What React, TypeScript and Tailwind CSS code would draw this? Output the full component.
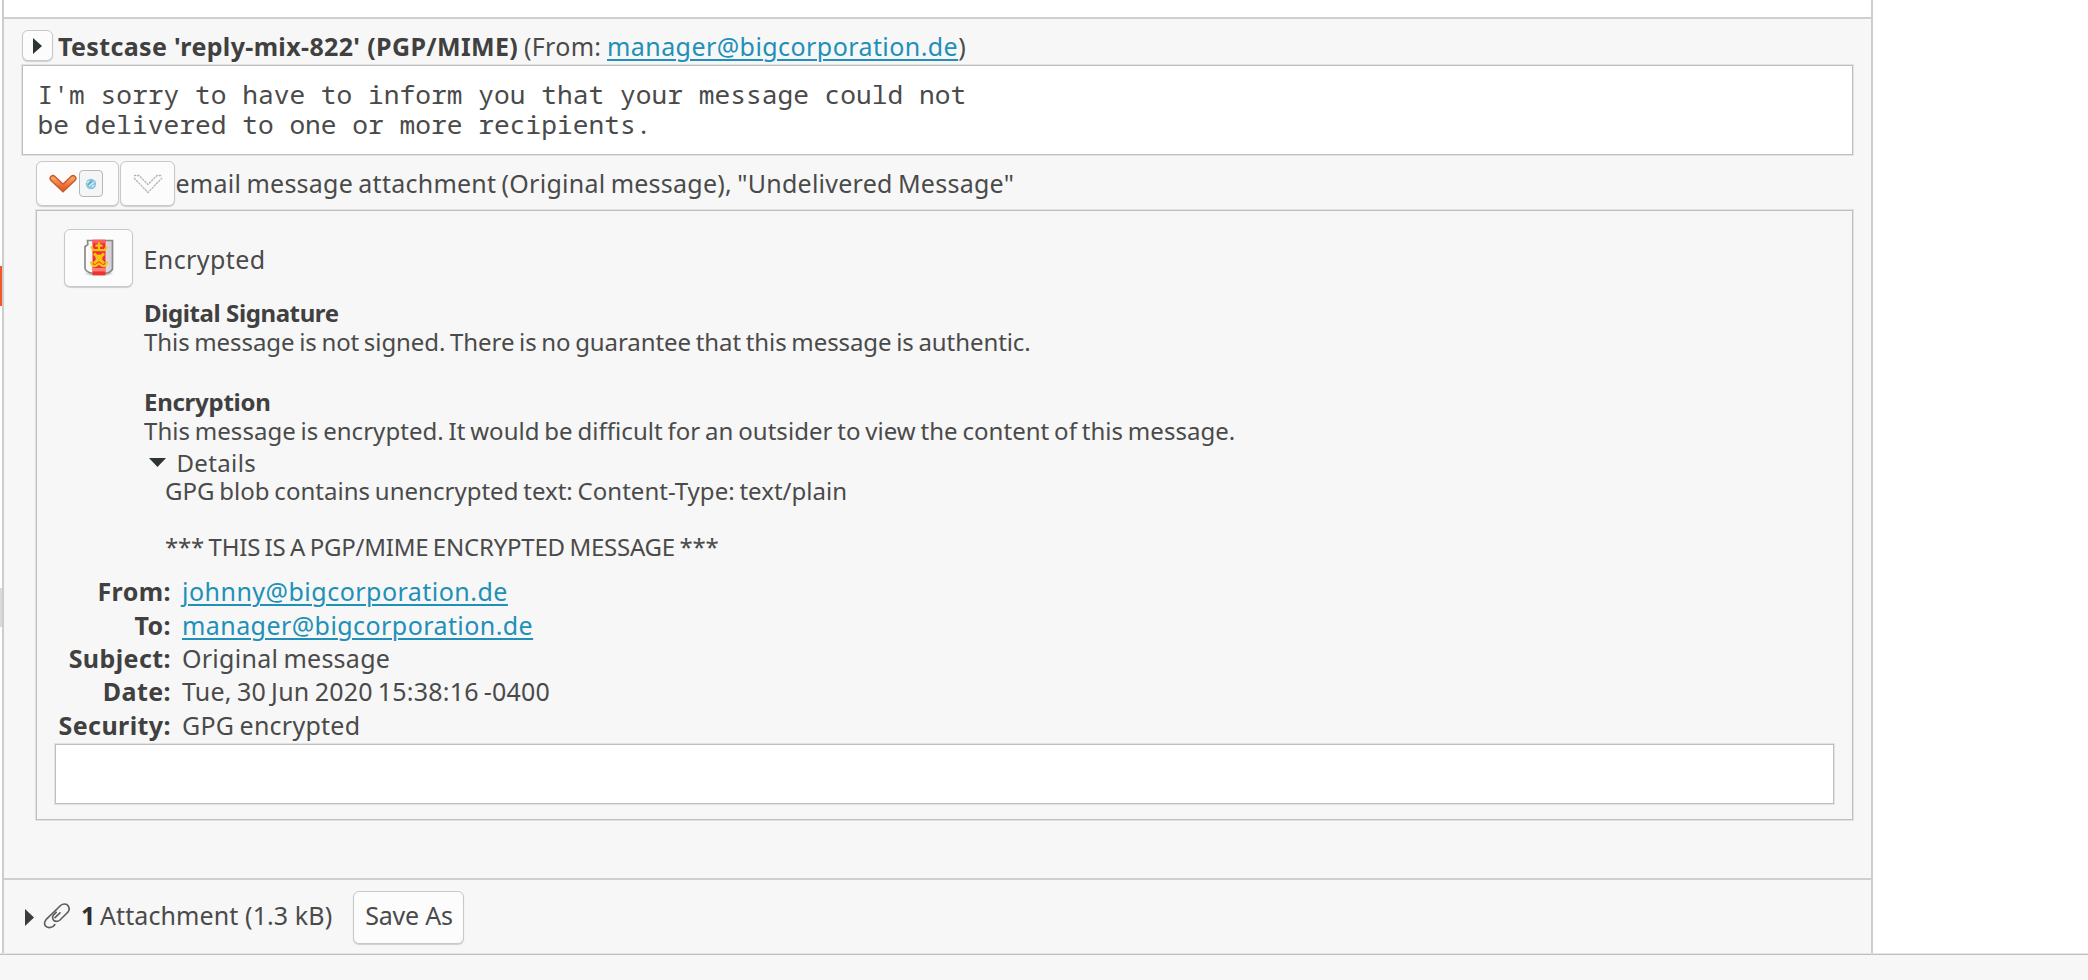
import type { ReactNode } from 'react';

const frame = 'border border-[#bfbfbf] shadow-[0_0_0_1px_#e2e2e2]';
const button =
  'flex shrink-0 items-center rounded-[6px] border-[1.5px] border-[#c8c8c8] bg-[#fcfcfc] shadow-[0_1px_1px_#cfcfcf]';
const link = 'text-[#2190b8] underline decoration-[1.5px] underline-offset-[3px]';

function ChevronOrange() {
  return (
    <svg className="h-[20px] w-[28px]" viewBox="0 0 28 20">
      <defs>
        <linearGradient id="chevron" x1="0" y1="0" x2="0" y2="1">
          <stop offset="0" stopColor="#f0a164" />
          <stop offset="1" stopColor="#e5622a" />
        </linearGradient>
      </defs>
      <path d="M4 4.5 L14 14 L24 4.5" fill="none" stroke="#cb5628" strokeWidth="7" strokeLinecap="round" />
      <path d="M4 4.5 L14 14 L24 4.5" fill="none" stroke="url(#chevron)" strokeWidth="4.4" strokeLinecap="round" />
    </svg>
  );
}

function ChevronOutline() {
  return (
    <svg className="h-[20px] w-[30px]" viewBox="0 0 30 20">
      <path
        d="M1 1.5 H6 L15 10.5 L24 1.5 H29 M1 4 L15 18.5 L29 4"
        fill="none"
        stroke="#b4b4b4"
        strokeWidth="1.3"
        strokeDasharray="2.4 0.8"
      />
    </svg>
  );
}

function SealedLetter() {
  return (
    <svg className="h-[40px] w-[34px]" viewBox="0 0 34 40">
      <defs>
        <linearGradient id="paper" x1="0" y1="0" x2="1" y2="0">
          <stop offset="0" stopColor="#ffffff" />
          <stop offset="1" stopColor="#d5ccd3" />
        </linearGradient>
        <radialGradient id="ground">
          <stop offset="0" stopColor="#6b6b6b" />
          <stop offset="1" stopColor="#6b6b6b" stopOpacity="0" />
        </radialGradient>
      </defs>
      <ellipse cx="17" cy="35.5" rx="15" ry="3" fill="url(#ground)" />
      <path
        d="M5.5 2.5 H30.5 V31 Q30 33 26 35 H9 Q3.5 33.5 3 30 V8.5 L5.8 6.6 Z"
        fill="url(#paper)"
        stroke="#8a8a8a"
        strokeWidth="1.7"
      />
      <path d="M5.2 9.5 V30 Q6 32.5 10 33" fill="none" stroke="#fff" strokeWidth="1.6" />
      <rect x="10.5" y="1.8" width="13" height="35.4" fill="#f4302f" />
      <rect x="10.5" y="1.8" width="13" height="3.4" fill="#f8605e" />
      <rect x="10.5" y="30" width="13" height="3.4" fill="#fa8079" />
      <g fill="none" stroke="#f4c414" strokeWidth="2.2">
        <path d="M17 4.5 V11 M13.5 7.7 H20.5" />
        <path d="M9 8.5 L11.5 12.2 H22.5 L25 8.5" />
        <path d="M12 15.5 L22 25.5 M22 15.5 L12 25.5" strokeWidth="3" />
        <path d="M9 23.5 Q9.5 28.5 13.5 28 L17 25.5 L20.5 28 Q24.5 28.5 25 23.5" />
      </g>
      <circle cx="17" cy="20" r="3.4" fill="#f4c414" />
    </svg>
  );
}

function PaperClip() {
  return (
    <svg className="h-[27px] w-[28px]" viewBox="0 0 28 27" fill="none" stroke="#5c5c5c" strokeWidth="1.6" strokeLinecap="round">
      <path d="M12.5 8.5 L17.5 3.5 Q20.5 1 24 2.6 Q27.8 5.8 25 10 L17 18 Q13.8 20.6 10.8 18.5 Q8.4 15.5 10.8 12.6 L13.2 10.4" />
      <path d="M12.5 8.5 L3.2 17.4 Q0.2 21 2.6 24.2 Q6 27 10.2 24.4 L11.8 22.6" />
      <path d="M12 15.6 L17 10.8" />
    </svg>
  );
}

function Field({ label, children }: { label: string; children: ReactNode }) {
  return (
    <div className="flex gap-[11px] text-[25px] leading-[33.3px]">
      <span className="w-[116px] text-right font-bold tracking-[0.42px] text-[#404040]">{label}</span>
      <span className="[word-spacing:-1.5px]">{children}</span>
    </div>
  );
}

export default function App() {
  return (
    <div className="flex h-[980px] w-[2088px] flex-col overflow-hidden bg-[#f7f7f7] font-['Noto_Sans','Open_Sans',sans-serif] whitespace-nowrap text-[#4a4a4a]">
      <div className="flex h-[954px] bg-white">
        <div className="flex w-[2px] flex-col pt-[266px]">
          <div className="h-[40px] bg-[#f0582a]" />
          <div className="mt-[282px] h-[39px] bg-[#dadada]" />
        </div>

        <div className="flex w-[1871px] flex-col border-x-2 border-[#cdcdcd] bg-[#f7f7f7]">
          <div className="h-[17px] bg-white" />

          <div className="flex h-[863px] flex-col border-y-2 border-[#cfcfcf] pt-[11px] pl-[18px]">
            <div className="flex h-[31px] items-center text-[25px] leading-[31px]">
              <div className={`${button} h-[31px] w-[31px] justify-center`}>
                <svg className="h-[16px] w-[9px]" viewBox="0 0 9 16">
                  <path d="M0 0 L9 8 L0 16 Z" fill="#2e3436" />
                </svg>
              </div>
              <span className="w-[468px] pt-px pl-[5px] font-bold tracking-[0.36px] text-[#404040]">
                Testcase 'reply-mix-822' (PGP/MIME)
              </span>
              <span className="w-[86px] pt-px pl-[3px] tracking-[0.3px]">(From:</span>
              <span className={`${link} pt-px tracking-[0.43px]`}>manager@bigcorporation.de</span>
              <span className="pt-px">)</span>
            </div>

            <div
              className={`${frame} mt-1 h-[90px] w-[1831px] bg-white pt-[14.4px] pl-[14.5px] font-['Noto_Sans_Mono','DejaVu_Sans_Mono',monospace] text-[26.2px] leading-[29.6px] tracking-[0.03px]`}
            >
              <p>I'm sorry to have to inform you that your message could not</p>
              <p>be delivered to one or more recipients.</p>
            </div>

            <div className="mt-[6px] flex h-[45px] items-center pl-[14px] text-[25px]">
              <div className={`${button} h-[45px] w-[83px] pl-[11.5px]`}>
                <ChevronOrange />
                <div className="ml-[2px] flex h-[27px] w-[24px] items-center justify-center rounded-[4px] border-[1.5px] border-[#b8b8b8] bg-[#f4f5f6]">
                  <svg className="h-[12px] w-[12px]" viewBox="0 0 12 12">
                    <circle cx="6" cy="6" r="5.2" fill="#8cc6dc" />
                    <path d="M2 5 L4 3 M4 8 L9 4 M7 9 L9 7" stroke="#d4edf5" strokeWidth="1.4" />
                    <path d="M3 7 L7 3" stroke="#5aa5c3" strokeWidth="1.2" />
                  </svg>
                </div>
              </div>
              <div className={`${button} ml-px h-[45px] w-[55px] justify-center`}>
                <ChevronOutline />
              </div>
              <span className="pt-px pl-[0.5px] tracking-[0.25px] [word-spacing:-1.5px]">
                email message attachment (Original message), "Undelivered Message"
              </span>
            </div>

            <div className={`${frame} mt-1 flex h-[610px] w-[1817px] flex-col self-start ml-[14px] pt-[18px] pl-[18px]`}>
              <div className="flex h-[58px] items-center pl-[9px]">
                <div className={`${button} h-[58px] w-[69px] justify-center`}>
                  <SealedLetter />
                </div>
                <span className="pt-[4px] pl-[10.5px] text-[25px] tracking-[0.42px]">Encrypted</span>
              </div>

              <div className="mt-[10.5px] pl-[89px] text-[24px] leading-[29.7px]">
                <p className="font-bold tracking-[-0.4px] text-[#404040]">Digital Signature</p>
                <p className="tracking-[-0.07px] [word-spacing:-1.5px]">
                  This message is not signed. There is no guarantee that this message is authentic.
                </p>
                <p className="mt-[29.7px] font-bold tracking-[-0.27px] text-[#404040]">Encryption</p>
                <p className="tracking-[0.04px] [word-spacing:-1.5px]">
                  This message is encrypted. It would be difficult for an outsider to view the content of this message.
                </p>
                <div className="mt-[2px] flex h-[28.7px] items-center pl-[5px] leading-[28.7px]">
                  <svg className="mt-[1px] h-[9px] w-[17px]" viewBox="0 0 17 9">
                    <path d="M0 0 H17 L8.5 9 Z" fill="#2e3436" />
                  </svg>
                  <span className="pt-[2px] pl-[10.5px] tracking-[0.35px]">Details</span>
                </div>
                <div className="pl-[21px] leading-[28px]">
                  <p className="tracking-[0.02px] [word-spacing:-1.5px]">
                    GPG blob contains unencrypted text: Content-Type: text/plain
                  </p>
                  <p className="mt-[28px] tracking-[-0.22px] [word-spacing:-1.5px]">
                    *** THIS IS A PGP/MIME ENCRYPTED MESSAGE ***
                  </p>
                </div>
              </div>

              <div className="mt-[14.8px]">
                <Field label="From:">
                  <a className={`${link} tracking-[0.48px]`}>johnny@bigcorporation.de</a>
                </Field>
                <Field label="To:">
                  <a className={`${link} tracking-[0.43px]`}>manager@bigcorporation.de</a>
                </Field>
                <Field label="Subject:">
                  <span className="tracking-[0.26px]">Original message</span>
                </Field>
                <Field label="Date:">
                  <span className="tracking-[0.2px]">Tue, 30 Jun 2020 15:38:16 -0400</span>
                </Field>
                <Field label="Security:">
                  <span className="tracking-[0.25px]">GPG encrypted</span>
                </Field>
              </div>

              <div className={`${frame} mt-[2.2px] h-[60px] w-[1779px] bg-white`} />
            </div>
          </div>

          <div className="flex h-[74px] items-center pl-[20.5px] text-[25px]">
            <svg className="h-[17px] w-[9px]" viewBox="0 0 9 17">
              <path d="M0 0 L9 8.5 L0 17 Z" fill="#3c3c3c" />
            </svg>
            <div className="pb-[3px] pl-[9px]">
              <PaperClip />
            </div>
            <span className="ml-[9.5px] w-[20px] pb-[2.5px] pl-px font-bold text-[#303030]">1</span>
            <span className="w-[253px] pb-[2.5px] tracking-[0.1px]">Attachment (1.3 kB)</span>
            <div className={`${button} h-[53px] w-[111px] justify-center`}>
              <span className="pb-[2.5px] pl-px tracking-[-0.2px]">Save As</span>
            </div>
          </div>
        </div>
      </div>
      <div className="h-[26px] border-t border-[#bfbfbf] bg-[#f7f7f7] shadow-[0_-1px_0_#e6e6e6]" />
    </div>
  );
}
